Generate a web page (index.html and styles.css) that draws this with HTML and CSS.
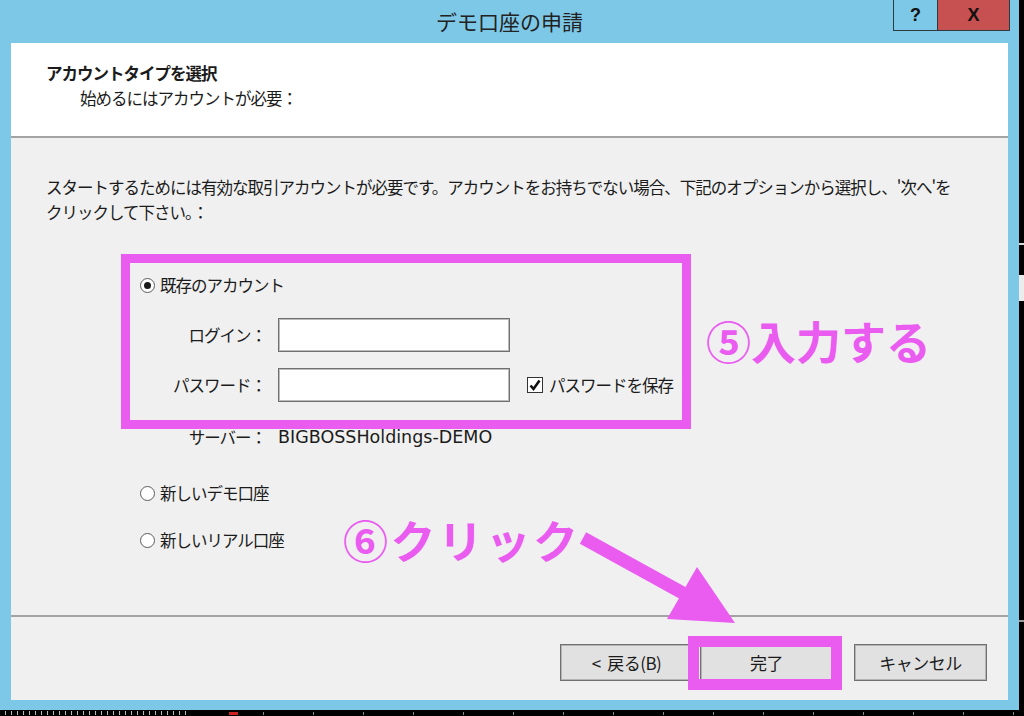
FILE: index.html
```html
<!DOCTYPE html>
<html lang="ja">
<head>
    <meta charset="UTF-8">
    <meta name="viewport" content="width=device-width, initial-scale=1.0">
    <title>デモ口座の申請</title>
    <link rel="stylesheet" href="styles.css">
</head>
<body>
    <div class="screen">
        <div class="window">
            <!-- Title bar -->
            <div class="titlebar">
                <span></span>
                <div class="title">デモ口座の申請</div>
                <div class="controls">
                    <button class="ctl help">?</button>
                    <button class="ctl close">X</button>
                </div>
            </div>

            <div class="client">
                <div class="header">
                    <div class="header-title">アカウントタイプを選択</div>
                    <div class="header-sub">始めるにはアカウントが必要：</div>
                </div>

                <div class="content">
                    <p class="intro">スタートするためには有効な取引アカウントが必要です。アカウントをお持ちでない場合、下記のオプションから選択し、'次へ'を<br>クリックして下さい。：</p>

                    <div class="options">
                        <label class="radio-row"><span class="radio checked"></span>既存のアカウント</label>

                        <div class="account-grid">
                            <span class="field-label">ログイン：</span>
                            <span class="input"></span>
                            <span></span>

                            <span class="field-label">パスワード：</span>
                            <span class="input"></span>
                            <label class="check-row">
                                <span class="checkbox">
                                    <svg width="14" height="14" viewBox="0 0 14 14"><path d="M2.5 7.5 L5.5 11 L11.5 2.5" fill="none" stroke="#111" stroke-width="2.6"/></svg>
                                </span>
                                パスワードを保存
                            </label>

                            <span class="field-label server-row">サーバー：</span>
                            <span class="server server-row">BIGBOSSHoldings-DEMO</span>
                        </div>

                        <label class="radio-row demo"><span class="radio"></span>新しいデモ口座</label>
                        <label class="radio-row real"><span class="radio"></span>新しいリアル口座</label>
                    </div>
                </div>

                <div class="footer">
                    <button class="btn back">&lt;&nbsp; 戻る(B)</button>
                    <button class="btn finish">完了</button>
                    <button class="btn cancel">キャンセル</button>
                </div>
            </div>
        </div>
        <div class="desk-right"></div>
        <div class="desk-bottom"></div>

        <!-- annotations drawn over the dialog -->
        <div class="mark mark-account"></div>
        <div class="mark mark-finish"></div>
        <div class="note note-input">⑤入力する</div>
        <div class="note note-click">⑥クリック</div>
        <svg class="arrow" width="1024" height="716" viewBox="0 0 1024 716">
            <line x1="583" y1="538" x2="690" y2="597" stroke="#ea5cf0" stroke-width="13"/>
            <polygon points="697,567 735,623 667,619" fill="#ea5cf0"/>
        </svg>
    </div>
</body>
</html>
```

FILE: styles.css
```css
* {
    box-sizing: border-box;
    margin: 0;
    padding: 0;
}

body {
    background: #000;
    font-family: "Noto Sans CJK JP", sans-serif;
    font-size: 16.5px;
    letter-spacing: -1px;
    color: #1b1b1b;
    width: 1024px;
    height: 716px;
    overflow: hidden;
}

.screen {
    position: relative;
    width: 1024px;
    height: 716px;
    display: grid;
    grid-template-columns: 1019px 5px;
    grid-template-rows: 710px 6px;
}

.window {
    background: #7ec8e7;
    display: flex;
    flex-direction: column;
    padding: 0 11px 10px 11px;
}

/* title bar */
.titlebar {
    height: 43px;
    margin: 0 -11px;
    padding: 0 9px;
    display: grid;
    grid-template-columns: 1fr auto 1fr;
}

.title {
    font-size: 21px;
    letter-spacing: 0;
    line-height: 43px;
    color: #222;
}

.controls {
    display: flex;
    justify-self: end;
    height: 31px;
}

.ctl {
    font-family: "Liberation Sans", sans-serif;
    font-weight: bold;
    font-size: 18px;
    letter-spacing: 0;
    color: #111;
    border: 1px solid #2f3a40;
    border-top: none;
    height: 31px;
}

.help {
    width: 45px;
    background: #7ec8e7;
}

.close {
    width: 72px;
    background: #c75050;
    border-left: none;
}

/* client area */
.client {
    flex: 1;
    background: #f0f0f0;
    display: flex;
    flex-direction: column;
}

.header {
    height: 95px;
    background: #fff;
    border-bottom: 2px solid #a3a3a3;
    padding: 18px 0 0 35px;
    line-height: 24px;
}

.header-title {
    font-weight: 700;
}

.header-sub {
    padding-left: 34px;
    margin-top: 1px;
}

.content {
    flex: 1;
    padding: 37px 0 0 35px;
}

.intro {
    line-height: 25px;
    white-space: nowrap;
}

.options {
    margin-top: 48px;
    padding-left: 94px;
}

.radio-row {
    display: flex;
    align-items: center;
    gap: 5px;
    height: 24px;
}

.radio {
    width: 15px;
    height: 15px;
    border-radius: 50%;
    border: 1px solid #5c5c5c;
    background: #fff;
    display: flex;
    align-items: center;
    justify-content: center;
}

.radio.checked::after {
    content: "";
    width: 7px;
    height: 7px;
    border-radius: 50%;
    background: #1a1a1a;
}

.account-grid {
    display: grid;
    grid-template-columns: 126px 232px auto;
    grid-template-rows: 34px 34px 31px;
    column-gap: 12px;
    row-gap: 16px;
    margin-top: 21px;
    align-items: center;
}

.field-label {
    text-align: right;
}

.server-row {
    align-self: end;
    line-height: 24px;
}

.server {
    font-family: "DejaVu Sans", sans-serif;
    font-size: 17.5px;
    letter-spacing: 0;
    grid-column: 2 / 4;
}

.input {
    height: 34px;
    background: #fff;
    border: 1px solid #707070;
    box-shadow: inset 0 0 0 1px #bcbcbc;
}

.check-row {
    display: flex;
    align-items: center;
    gap: 6px;
    margin-left: 5px;
}

.checkbox {
    width: 16px;
    height: 16px;
    border: 1px solid #333;
    background: #fff;
    display: flex;
    align-items: center;
    justify-content: center;
}

.radio-row.demo {
    margin-top: 32px;
}

.radio-row.real {
    margin-top: 23px;
}

/* footer buttons */
.footer {
    height: 85px;
    border-top: 2px solid #a3a3a3;
    display: flex;
    justify-content: flex-end;
    align-items: flex-start;
    padding: 27px 21px 0 0;
}

.btn {
    width: 133px;
    height: 37px;
    background: #e1e1e1;
    border: 1px solid #707070;
    box-shadow: inset 0 0 0 1px #b4b4b4;
    font-family: "Noto Sans CJK JP", sans-serif;
    font-size: 17px;
    letter-spacing: -0.5px;
    color: #1b1b1b;
}

.btn.finish {
    margin-left: 7px;
}

.btn.cancel {
    margin-left: 21px;
}

/* desktop behind the window */
.desk-right {
    grid-row: 1 / 3;
    grid-column: 2;
    background:
        linear-gradient(#d8d8d8, #d8d8d8) 0 243px / 5px 2px no-repeat,
        linear-gradient(#ececec, #ececec) 0 275px / 5px 26px no-repeat,
        linear-gradient(#9a9a9a, #9a9a9a) 0 620px / 5px 2px no-repeat,
        #000;
}

.desk-bottom {
    background:
        repeating-linear-gradient(90deg, #bbb 0 1px, transparent 1px 6px) 5px 1px / 186px 4px no-repeat,
        linear-gradient(#c22, #c22) 229px 2px / 9px 3px no-repeat,
        repeating-linear-gradient(90deg, #888 0 1px, transparent 1px 50px) 263px 2px / 760px 3px no-repeat,
        #000;
}

/* pink annotations */
.mark {
    position: absolute;
    border: 9px solid #ea5cf0;
}

.mark-account {
    left: 121px;
    top: 254px;
    width: 570px;
    height: 175px;
}

.mark-finish {
    left: 688px;
    top: 636px;
    width: 154px;
    height: 54px;
    border-width: 11px;
}

.note {
    position: absolute;
    color: #ea5cf0;
    font-weight: 700;
    font-size: 45px;
    line-height: 45px;
    white-space: nowrap;
}

.note-input {
    left: 706px;
    top: 318px;
    letter-spacing: 0;
}

.note-click {
    left: 343px;
    top: 517px;
    letter-spacing: 2.5px;
}

.arrow {
    position: absolute;
    left: 0;
    top: 0;
    pointer-events: none;
}
```
